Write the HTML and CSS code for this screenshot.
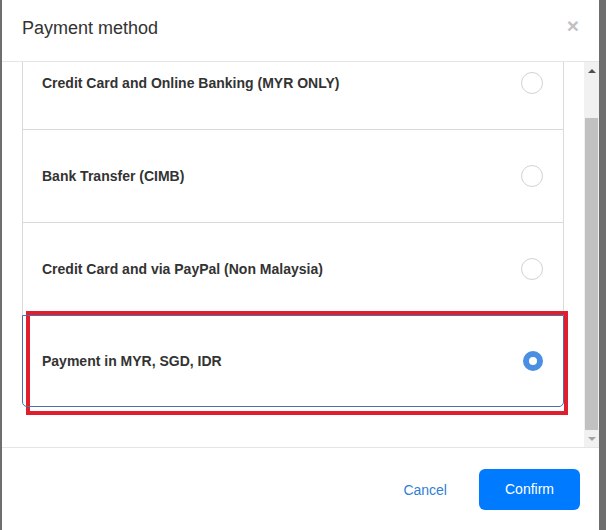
FILE: index.html
```html
<!DOCTYPE html>
<html lang="en">
<head>
    <meta charset="UTF-8">
    <meta name="viewport" content="width=device-width, initial-scale=1.0">
    <title>Payment method</title>
    <link rel="stylesheet" href="styles.css">
</head>
<body>
    <div class="modal">
        <div class="modal-header">
            <h5 class="modal-title">Payment method</h5>
            <button type="button" class="close">&times;</button>
        </div>

        <div class="modal-body">
            <div class="scroll-area" id="scroll-area">
                <div class="list-group">
                    <label class="list-item">
                        <span class="item-name">Credit Card and Online Banking (MYR ONLY)</span>
                        <span class="radio"></span>
                    </label>
                    <label class="list-item">
                        <span class="item-name">Bank Transfer (CIMB)</span>
                        <span class="radio"></span>
                    </label>
                    <label class="list-item">
                        <span class="item-name">Credit Card and via PayPal (Non Malaysia)</span>
                        <span class="radio"></span>
                    </label>
                    <label class="list-item active">
                        <span class="item-name">Payment in MYR, SGD, IDR</span>
                        <span class="radio checked"></span>
                    </label>
                </div>
            </div>

            <div class="scrollbar">
                <div class="scroll-btn up"></div>
                <div class="scroll-track">
                    <div class="scroll-thumb"></div>
                </div>
                <div class="scroll-btn down"></div>
            </div>
        </div>

        <div class="modal-footer">
            <a href="#" class="btn-link">Cancel</a>
            <button type="button" class="btn-primary">Confirm</button>
        </div>
    </div>

    <div class="highlight"></div>

    <script>
        var scrollArea = document.getElementById('scroll-area');
        scrollArea.scrollTop = scrollArea.scrollHeight;
    </script>
</body>
</html>
```

FILE: styles.css
```css
body {
    font-family: "Liberation Sans", Arial, sans-serif;
    margin: 0;
    padding: 0;
    background-color: #6e6e6e;
    height: 530px;
    overflow: hidden;
}

.modal {
    width: 597px;
    margin-left: 2px;
    background-color: #fff;
    display: flex;
    flex-direction: column;
}

.modal-header {
    display: flex;
    align-items: center;
    justify-content: space-between;
    padding: 17px 20px 22px 20px;
    border-bottom: 1px solid #e5e5e5;
}

.modal-title {
    margin: 0;
    font-size: 18px;
    font-weight: normal;
    line-height: 22px;
    color: #333;
}

.close {
    background: none;
    border: none;
    padding: 0;
    margin-top: -6px;
    font-family: "Liberation Sans", Arial, sans-serif;
    font-size: 21px;
    font-weight: bold;
    line-height: 1;
    color: #c2c2c2;
    cursor: pointer;
}

/* body: list on the left, scrollbar on the right */
.modal-body {
    display: flex;
    height: 385px;
}

.scroll-area {
    flex: 1;
    overflow: hidden;
    padding: 20px 20px 0 20px;
}

.scroll-area::after {
    content: "";
    display: block;
    height: 40px;
}

.scrollbar {
    width: 15px;
    display: flex;
    flex-direction: column;
    background-color: #f1f1f1;
}

.scroll-btn {
    height: 17px;
    display: flex;
    align-items: center;
    justify-content: center;
}

.scroll-btn::before {
    content: "";
    width: 0;
    height: 0;
    border-left: 4px solid transparent;
    border-right: 4px solid transparent;
}

.scroll-btn.up::before {
    border-bottom: 4px solid #505050;
}

.scroll-btn.down::before {
    border-top: 4px solid #a3a3a3;
}

.scroll-track {
    flex: 1;
    display: flex;
    flex-direction: column;
    padding: 39px 1px 0 1px;
}

.scroll-thumb {
    flex: 1;
    background-color: #c1c1c1;
}

.list-group {
    display: flex;
    flex-direction: column;
}

.list-item {
    position: relative;
    display: flex;
    align-items: center;
    justify-content: space-between;
    padding: 35px 20px 35px 19px;
    border: 1px solid #dadada;
    font-size: 14px;
    font-weight: bold;
    line-height: 16px;
    color: #333;
    cursor: pointer;
}

.list-item + .list-item {
    margin-top: -1px;
}

.list-item.active {
    border-color: #4b6fa8;
    border-radius: 0 0 5px 5px;
    z-index: 1;
}

.radio {
    width: 20px;
    height: 20px;
    border: 1px solid #d2d2d2;
    border-radius: 50%;
    background-color: #fff;
}

.radio.checked {
    width: 8px;
    height: 8px;
    border: 6px solid #4a8fe2;
}

.modal-footer {
    display: flex;
    align-items: center;
    justify-content: flex-end;
    padding: 21px 19px 20px 20px;
    border-top: 1px solid #e5e5e5;
}

.btn-link {
    font-size: 14px;
    color: #2f7fd4;
    text-decoration: none;
    margin-right: 32px;
}

.btn-primary {
    padding: 12px 26px;
    background-color: #007bff;
    color: #fff;
    border: none;
    border-radius: 6px;
    font-family: "Liberation Sans", Arial, sans-serif;
    font-size: 14px;
    line-height: 17px;
    cursor: pointer;
}

.highlight {
    position: absolute;
    left: 26px;
    top: 311px;
    width: 534px;
    height: 96px;
    border: 4px solid #df1f2d;
}
```
